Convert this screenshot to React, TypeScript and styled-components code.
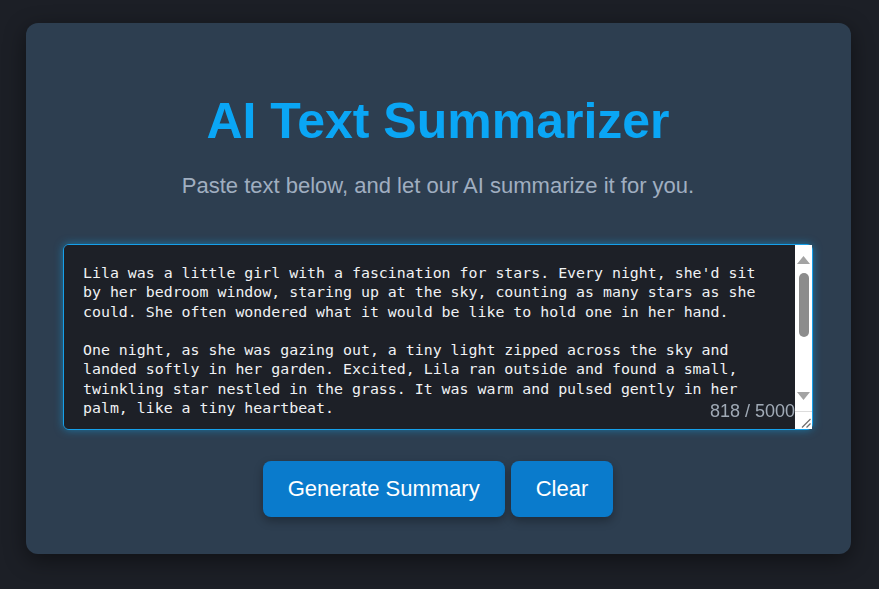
import React, { useState } from "react";
import styled, { createGlobalStyle } from "styled-components";

const GlobalStyle = createGlobalStyle`
  html, body {
    margin: 0;
    padding: 0;
    background: #1c1f26;
  }
  body {
    font-family: "Liberation Sans", Arial, sans-serif;
  }
`;

const Page = styled.div`
  min-height: 589px;
  box-sizing: border-box;
  display: flex;
  justify-content: center;
  align-items: flex-start;
  padding: 23px 2px 0 0;
`;

const Card = styled.main`
  width: 825px;
  box-sizing: border-box;
  background: #2d3e50;
  border-radius: 12px;
  box-shadow: 0 6px 22px rgba(0, 0, 0, 0.45);
  padding: 69px 38px 37px 37px;
  display: flex;
  flex-direction: column;
  align-items: center;
`;

const Title = styled.h1`
  margin: 0 0 23px;
  font-family: "Liberation Sans", Arial, sans-serif;
  font-weight: 700;
  font-size: 50px;
  line-height: normal;
  color: #0aa6f5;
  text-align: center;
`;

const Subtitle = styled.p`
  margin: 0 0 45px;
  font-family: "Liberation Sans", Arial, sans-serif;
  font-size: 22px;
  line-height: normal;
  color: #a0aec0;
  text-align: center;
`;

const EditorWrap = styled.div`
  position: relative;
  width: 100%;
  margin-bottom: 31px;
`;

const TextArea = styled.textarea`
  display: block;
  width: 100%;
  height: 186px;
  box-sizing: border-box;
  margin: 0;
  padding: 19px 40px 17px 19px;
  border: 1px solid #16a0ea;
  border-radius: 6px;
  background: #1d2027;
  color: #f0f2f4;
  font-family: "DejaVu Sans Mono", "Liberation Mono", monospace;
  font-size: 14.9px;
  line-height: 19.3px;
  outline: none;
  resize: none;
  box-shadow: 0 0 9px rgba(14, 165, 233, 0.55);
  overflow-y: auto;
  scrollbar-width: none;
`;

/* Scrollbar drawn over the textarea's right edge */
const ScrollBar = styled.div`
  position: absolute;
  top: 1px;
  right: 1px;
  bottom: 1px;
  width: 17px;
  background: #ffffff;
  display: flex;
  flex-direction: column;
  align-items: center;
  pointer-events: none;
`;

const ArrowBox = styled.div<{ $down?: boolean }>`
  height: 20px;
  width: 100%;
  display: flex;
  justify-content: center;
  align-items: ${(p) => (p.$down ? "flex-start" : "flex-end")};
  padding: ${(p) => (p.$down ? "1px 0 0" : "0 0 1px")};
  box-sizing: border-box;
`;

const Track = styled.div`
  flex: 1;
  width: 100%;
  display: flex;
  justify-content: center;
  padding-top: 8px;
  box-sizing: border-box;
`;

const Thumb = styled.div`
  width: 10px;
  height: 64px;
  border-radius: 5px;
  background: #8c8c8c;
`;

const Corner = styled.div`
  height: 18px;
  width: 100%;
  border-top: 1px solid #dcdcdc;
  box-sizing: border-box;
  display: flex;
  justify-content: flex-end;
  align-items: flex-end;
`;

const Counter = styled.span`
  position: absolute;
  right: 18px;
  bottom: 8px;
  font-family: "Liberation Sans", Arial, sans-serif;
  font-size: 18px;
  line-height: normal;
  color: #a0aab6;
  pointer-events: none;
`;

const ButtonRow = styled.div`
  display: flex;
  justify-content: center;
  gap: 6px;
`;

const ActionButton = styled.button`
  height: 56px;
  padding: 0 25px;
  border: none;
  border-radius: 8px;
  background: #0a7bcc;
  color: #ffffff;
  font-family: "Liberation Sans", Arial, sans-serif;
  font-size: 22px;
  line-height: 26px;
  cursor: pointer;
  box-shadow: 0 4px 10px rgba(0, 0, 0, 0.3);
`;

const STORY = `Lila was a little girl with a fascination for stars. Every night, she'd sit by her bedroom window, staring up at the sky, counting as many stars as she could. She often wondered what it would be like to hold one in her hand.

One night, as she was gazing out, a tiny light zipped across the sky and landed softly in her garden. Excited, Lila ran outside and found a small, twinkling star nestled in the grass. It was warm and pulsed gently in her palm, like a tiny heartbeat.

Lila named the star Twinkle and kept it in a jar beside her bed. Each evening, Twinkle glowed softly, filling her room with silver light as she drifted off to sleep.

But one night, the star began to flicker and fade. Lila knew it missed the sky, so she opened the jar and watched Twinkle float home.`;

const UpArrow = () => (
  <svg width="13" height="8" viewBox="0 0 13 8">
    <polygon points="6.5,0 13,8 0,8" fill="#a3a3a3" />
  </svg>
);

const DownArrow = () => (
  <svg width="13" height="8" viewBox="0 0 13 8">
    <polygon points="0,0 13,0 6.5,8" fill="#a3a3a3" />
  </svg>
);

const Grip = () => (
  <svg width="12" height="12" viewBox="0 0 12 12">
    <line x1="10.5" y1="2" x2="2" y2="10.5" stroke="#6e6e6e" strokeWidth="1.2" />
    <line x1="10.5" y1="6.5" x2="6.5" y2="10.5" stroke="#6e6e6e" strokeWidth="1.2" />
  </svg>
);

export default function App() {
  const [text, setText] = useState(STORY);
  return (
    <>
      <GlobalStyle />
      <Page>
        <Card>
          <Title>AI Text Summarizer</Title>
          <Subtitle>Paste text below, and let our AI summarize it for you.</Subtitle>
          <EditorWrap>
            <TextArea
              value={text}
              spellCheck={false}
              onChange={(e) => setText(e.target.value)}
            />
            <Counter>818 / 5000</Counter>
            <ScrollBar aria-hidden="true">
              <ArrowBox>
                <UpArrow />
              </ArrowBox>
              <Track>
                <Thumb />
              </Track>
              <ArrowBox $down>
                <DownArrow />
              </ArrowBox>
              <Corner>
                <Grip />
              </Corner>
            </ScrollBar>
          </EditorWrap>
          <ButtonRow>
            <ActionButton type="button">Generate Summary</ActionButton>
            <ActionButton type="button" onClick={() => setText("")}>
              Clear
            </ActionButton>
          </ButtonRow>
        </Card>
      </Page>
    </>
  );
}
